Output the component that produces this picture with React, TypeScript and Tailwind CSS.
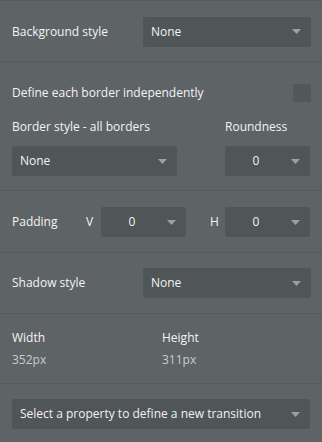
import React from "react";

function Arrow() {
  return (
    <svg width="9" height="5" viewBox="0 0 9 5" className="shrink-0">
      <path d="M0 0 L9 0 L4.5 5 Z" fill="#9aa0a4" />
    </svg>
  );
}

interface SelectProps {
  value: string;
  className?: string;
  center?: boolean;
}

function Select({ value, className = "", center = false }: SelectProps) {
  return (
    <div className={`h-[30px] bg-[#505557] rounded-[2px] flex items-center pl-2 pr-[10px] ${className}`}>
      <span className={`flex-1 text-[12px] text-[#f2f2f2] truncate ${center ? "text-center pl-1 pr-4" : ""}`}>
        {value}
      </span>
      <Arrow />
    </div>
  );
}

export default function App() {
  return (
    <div
      className="w-[322px] h-[442px] bg-[#5e6366] border-t border-[#575b5e] flex flex-col overflow-hidden"
      style={{ fontFamily: '"Open Sans", sans-serif' }}
    >
      <div className="h-[61px] shrink-0 border-b border-[#575b5e] flex items-center pl-3 pr-[11px] pt-[1px]">
        <span className="text-[12px] text-[#f4f4f4] flex-1">Background style</span>
        <Select value="None" className="w-[168px]" />
      </div>

      <div className="h-[129px] shrink-0 border-b border-[#575b5e] flex flex-col pl-3 pr-3">
        <div className="h-[18px] flex items-center justify-between mt-[22px]">
          <span className="text-[12px] text-[#f4f4f4]">Define each border independently</span>
          <div className="w-[18px] h-[18px] bg-[#52575a] rounded-[1px] mr-[-1px]" />
        </div>
        <div className="flex mt-[15px] gap-[48px]">
          <div className="w-[165px] flex flex-col gap-[9px]">
            <span className="text-[12px] text-[#f4f4f4] leading-[20px]">Border style - all borders</span>
            <Select value="None" />
          </div>
          <div className="w-[85px] flex flex-col gap-[9px]">
            <span className="text-[12px] text-[#f4f4f4] leading-[20px]">Roundness</span>
            <Select value="0" center />
          </div>
        </div>
      </div>

      <div className="h-[62px] shrink-0 border-b border-[#575b5e] flex items-center pl-3 pr-3 pt-[1px]">
        <span className="text-[12px] text-[#f4f4f4] w-[74px]">Padding</span>
        <span className="text-[12px] text-[#f4f4f4] w-[15px]">V</span>
        <Select value="0" center className="w-[85px]" />
        <span className="text-[12px] text-[#f4f4f4] w-[39px] pl-6">H</span>
        <Select value="0" center className="w-[85px]" />
      </div>

      <div className="h-[61px] shrink-0 border-b border-[#575b5e] flex items-center pl-3 pr-[11px]">
        <span className="text-[12px] text-[#f4f4f4] flex-1">Shadow style</span>
        <Select value="None" className="w-[168px]" />
      </div>

      <div className="h-[70px] shrink-0 border-b border-[#575b5e] flex pl-3 pt-[14px]">
        <div className="w-[150px] flex flex-col gap-[3px]">
          <span className="text-[12px] text-[#f4f4f4] leading-[19px]">Width</span>
          <span className="text-[12px] text-[#c9cccd] leading-[19px]">352px</span>
        </div>
        <div className="flex flex-col gap-[3px]">
          <span className="text-[12px] text-[#f4f4f4] leading-[19px]">Height</span>
          <span className="text-[12px] text-[#c9cccd] leading-[19px]">311px</span>
        </div>
      </div>

      <div className="flex-1 pl-3 pr-3 pt-[15px]">
        <Select value="Select a property to define a new transition" />
      </div>
    </div>
  );
}
